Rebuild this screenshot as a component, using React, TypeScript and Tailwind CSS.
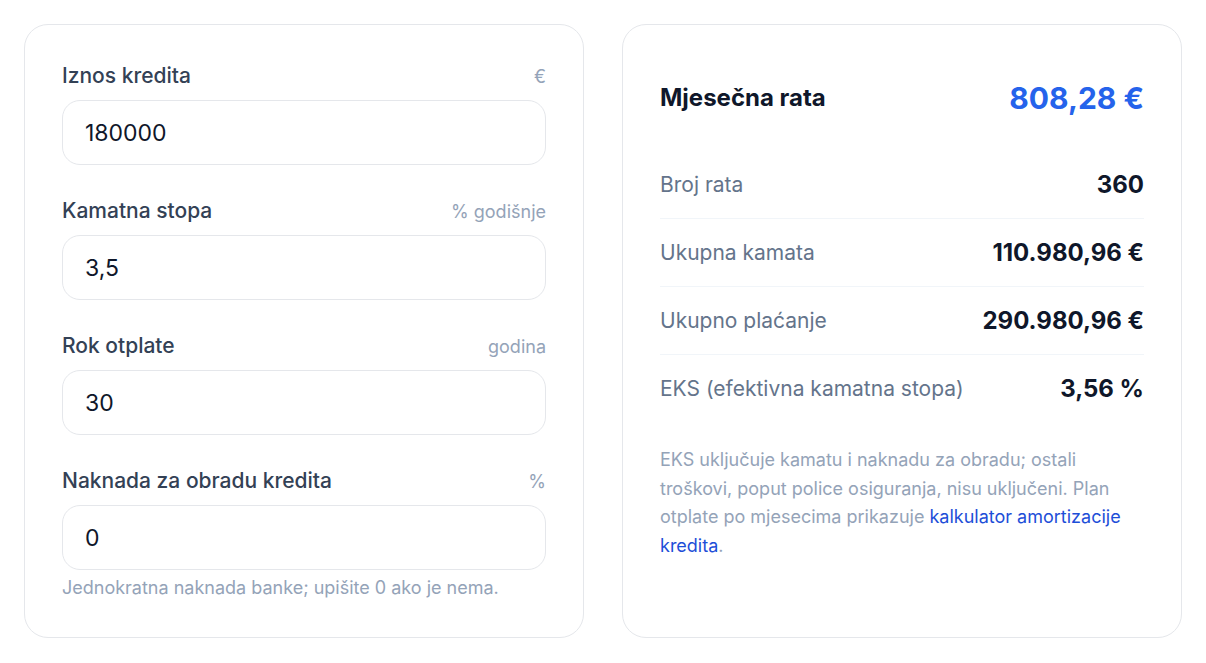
import type { ReactNode } from "react";

const fields = [
  { label: "Iznos kredita", unit: "€", value: "180000" },
  { label: "Kamatna stopa", unit: "% godišnje", value: "3,5" },
  { label: "Rok otplate", unit: "godina", value: "30" },
  { label: "Naknada za obradu kredita", unit: "%", value: "0" },
];

const results = [
  { label: "Broj rata", value: "360" },
  { label: "Ukupna kamata", value: "110.980,96 €" },
  { label: "Ukupno plaćanje", value: "290.980,96 €" },
  { label: "EKS (efektivna kamatna stopa)", value: "3,56 %" },
];

function Field({ label, unit, children }: { label: string; unit: string; children: ReactNode }) {
  return (
    <div>
      <div className="flex h-[28px] items-center justify-between">
        <label className="text-[21px] font-medium text-[#334155]">{label}</label>
        <span className="text-[18px] text-[#94a3b8]">{unit}</span>
      </div>
      <div className="mt-[10px]">{children}</div>
    </div>
  );
}

export default function App() {
  return (
    <div
      className="grid min-h-[663px] grid-cols-2 gap-[38px] bg-white p-[24px] pb-[26px]"
      style={{ fontFamily: "Inter, 'Noto Sans', sans-serif" }}
    >
      <div className="flex flex-col gap-[32px] rounded-[24px] border border-[#e5e7eb] p-[37px]">
        {fields.map((f, i) => (
          <Field key={f.label} label={f.label} unit={f.unit}>
            <input
              type="text"
              defaultValue={f.value}
              className="h-[65px] w-full rounded-[18px] border border-[#e5e7eb] bg-white px-[22px] text-[23px] text-[#0f172a] outline-none"
            />
            {i === fields.length - 1 && (
              <p className="mt-[6px] text-[18px] leading-[24px] text-[#94a3b8]">
                Jednokratna naknada banke; upišite 0 ako je nema.
              </p>
            )}
          </Field>
        ))}
      </div>

      <div className="rounded-[24px] border border-[#e5e7eb] p-[37px]">
        <div className="flex h-[72px] items-center justify-between">
          <h2 className="text-[24px] font-bold text-[#0f172a]">Mjesečna rata</h2>
          <span className="text-[30px] font-bold text-[#2563eb]">808,28 €</span>
        </div>
        <div className="mt-[17px]">
          {results.map((r, i) => (
            <div
              key={r.label}
              className={`flex h-[68px] items-center justify-between ${
                i < results.length - 1 ? "border-b border-[#f1f5f9]" : ""
              }`}
            >
              <span className="text-[21px] text-[#64748b]">{r.label}</span>
              <span className="text-[24px] font-bold text-[#0f172a]">{r.value}</span>
            </div>
          ))}
        </div>
        <p className="mt-[23px] max-w-[475px] text-[18px] leading-[28.5px] text-[#94a3b8]">
          EKS uključuje kamatu i naknadu za obradu; ostali troškovi, poput police osiguranja,
          nisu uključeni. Plan otplate po mjesecima prikazuje{" "}
          <a href="#" className="text-[#1d4ed8]">
            kalkulator amortizacije kredita
          </a>
          .
        </p>
      </div>
    </div>
  );
}
